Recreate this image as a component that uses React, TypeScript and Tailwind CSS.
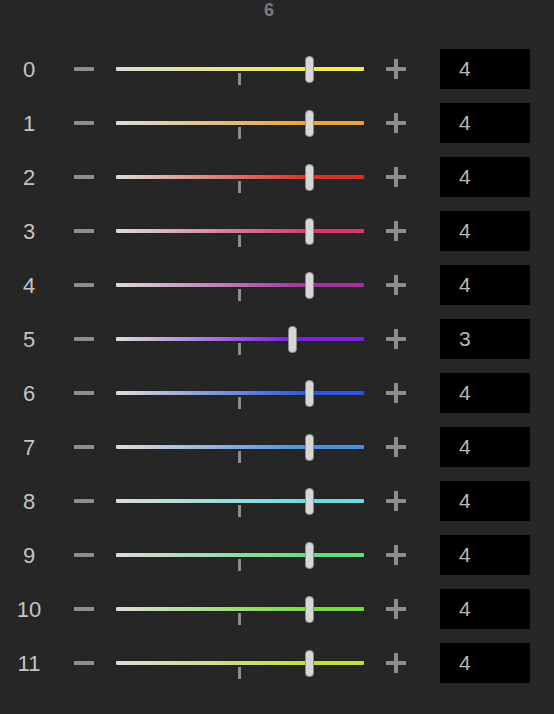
const channels = [
  { label: "0", value: 4, color: "#f2ee4a" },
  { label: "1", value: 4, color: "#e6a43a" },
  { label: "2", value: 4, color: "#d83228" },
  { label: "3", value: 4, color: "#d83a6a" },
  { label: "4", value: 4, color: "#a82c9c" },
  { label: "5", value: 3, color: "#7a1ee0" },
  { label: "6", value: 4, color: "#2a56dc" },
  { label: "7", value: 4, color: "#4a90e0" },
  { label: "8", value: 4, color: "#64e0e0" },
  { label: "9", value: 4, color: "#64dc84" },
  { label: "10", value: 4, color: "#7adc3c" },
  { label: "11", value: 4, color: "#c0e040" },
];

// slider geometry: zero sits at the tick, 17.6px per step
const ZERO = 123.5;
const STEP = 17.6;

function Slider({ value, color }: { value: number; color: string }) {
  const x = ZERO + value * STEP;
  return (
    <div className="relative w-[248px] h-[40px]">
      <div
        className="absolute left-0 right-0 top-[18px] h-[4px] rounded-[1px] shadow-[0_0_1px_rgba(0,0,0,0.6)]"
        style={{
          background: `linear-gradient(to right, #dcdcd8 0px, ${color} ${x}px, ${color} 100%)`,
        }}
      />
      <div className="absolute left-[122px] top-[24px] w-[3px] h-[12px] bg-[#8c8c8c]" />
      <div
        className="absolute top-[7px] w-[9px] h-[27px] -ml-[4.5px] rounded-[4px] bg-[#d6d6d6] border border-[#8a8a8a]"
        style={{ left: x }}
      />
    </div>
  );
}

function Row({ label, value, color }: { label: string; value: number; color: string }) {
  return (
    <div className="flex items-center h-[54px]">
      <div className="w-[58px] text-center text-[22px] text-[#c4c4c4]">{label}</div>
      <div className="ml-[16px] w-[20px] h-[4px] bg-[#8e8e8e]" />
      <div className="ml-[22px]">
        <Slider value={value} color={color} />
      </div>
      <div className="ml-[22px] relative w-[20px] h-[20px]">
        <div className="absolute left-0 top-[8px] w-[20px] h-[4px] bg-[#8e8e8e]" />
        <div className="absolute left-[8px] top-0 w-[4px] h-[20px] bg-[#8e8e8e]" />
      </div>
      <div className="ml-[34px] w-[90px] h-[40px] bg-black flex items-center pl-[19px] text-[21px] text-[#b8b8b8]">
        {value}
      </div>
    </div>
  );
}

export default function App() {
  return (
    <div
      className="w-[554px] h-[714px] bg-[#262626] overflow-hidden"
      style={{ fontFamily: '"Liberation Sans", Arial, sans-serif' }}
    >
      <div className="h-[42px] pl-[264px] pt-[0px] text-[18px] font-bold leading-[20px] text-[#7a7a7a]">
        6
      </div>
      <div className="flex flex-col">
        {channels.map((c) => (
          <Row key={c.label} {...c} />
        ))}
      </div>
    </div>
  );
}
